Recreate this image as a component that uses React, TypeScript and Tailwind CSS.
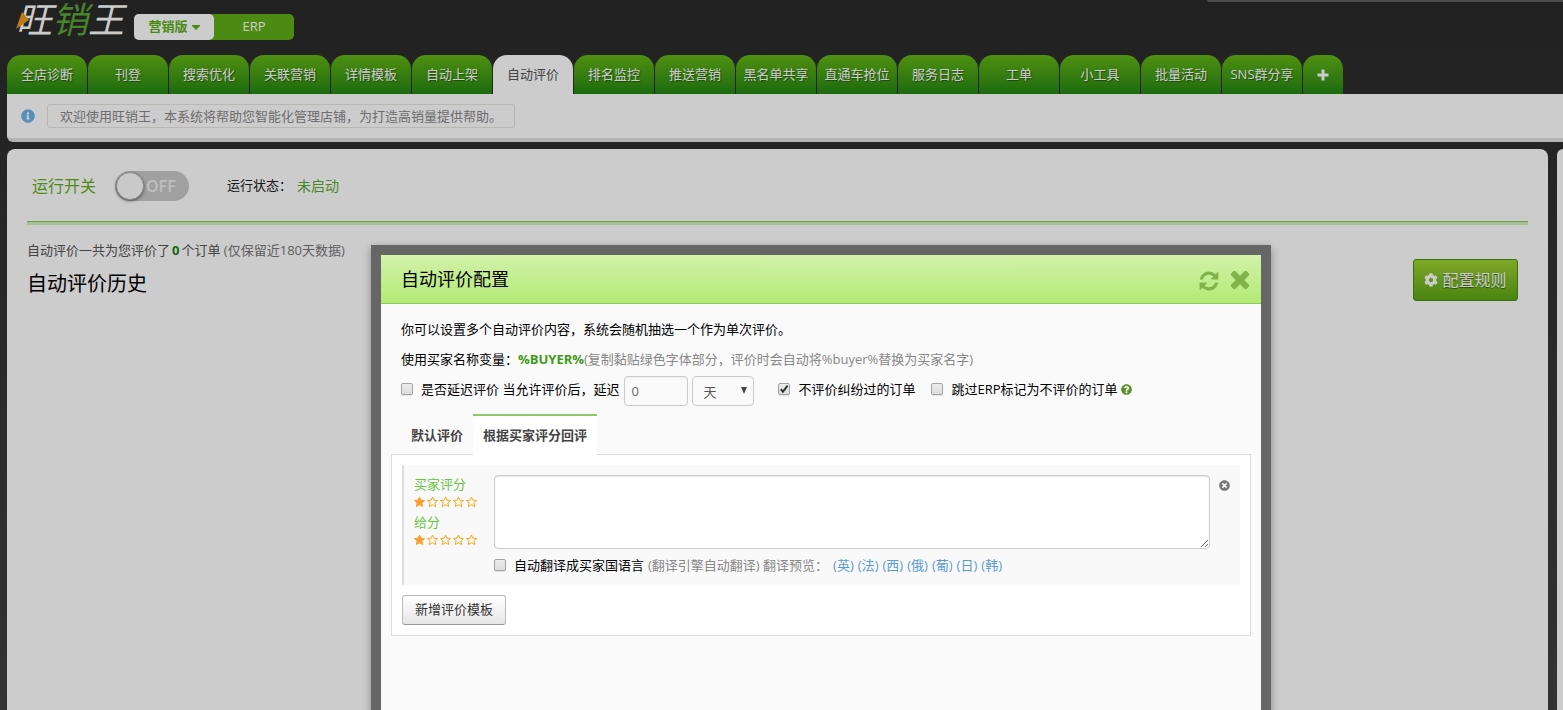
import { useState } from "react";
import type { InputHTMLAttributes } from "react";
import {
  FaCog,
  FaInfoCircle,
  FaQuestionCircle,
  FaTimesCircle,
} from "react-icons/fa";

const TABS = [
  "全店诊断",
  "刊登",
  "搜索优化",
  "关联营销",
  "详情模板",
  "自动上架",
  "自动评价",
  "排名监控",
  "推送营销",
  "黑名单共享",
  "直通车抢位",
  "服务日志",
  "工单",
  "小工具",
  "批量活动",
  "SNS群分享",
];

const LANGUAGES = ["英", "法", "西", "俄", "葡", "日", "韩"];

const RefreshIcon = () => (
  <svg viewBox="0 0 1792 1792" className="size-[22px] fill-current">
    <path d="M1639 1056q0 5-1 7-64 268-268 434.5t-478 166.5q-146 0-282.5-55t-243.5-157l-129 129q-19 19-45 19t-45-19-19-45v-448q0-26 19-45t45-19h448q26 0 45 19t19 45-19 45l-137 137q71 66 161 102t187 36q134 0 250-65t186-179q11-17 53-117 8-23 30-23h192q13 0 22.5 9.5t9.5 22.5zm25-800v448q0 26-19 45t-45 19h-448q-26 0-45-19t-19-45 19-45l138-138q-148-137-349-137-134 0-250 65t-186 179q-11 17-53 117-8 23-30 23h-199q-13 0-22.5-9.5t-9.5-22.5v-7q65-268 270-434.5t480-166.5q146 0 284 55.5t245 156.5l130-129q19-19 45-19t45 19 19 45z" />
  </svg>
);

const CloseIcon = () => (
  <svg viewBox="250 380 1292 1292" className="size-5 fill-current">
    <path d="M1490 1322q0 40-28 68l-136 136q-28 28-68 28t-68-28l-294-294-294 294q-28 28-68 28t-68-28l-136-136q-28-28-28-68t28-68l294-294-294-294q-28-28-28-68t28-68l136-136q28-28 68-28t68 28l294 294 294-294q28-28 68-28t68 28l136 136q28 28 28 68t-28 68l-294 294 294 294q28 28 28 68z" />
  </svg>
);

const Checkbox = (props: InputHTMLAttributes<HTMLInputElement>) => (
  <span className="relative block size-3 shrink-0">
    <input
      type="checkbox"
      className="peer block size-3 appearance-none rounded-[2px] border border-[#a3a3a3] bg-linear-to-b from-[#ededed] to-[#dcdcdc] shadow-[0_1px_1px_rgba(0,0,0,0.1)]"
      {...props}
    />
    <svg
      viewBox="0 0 12 12"
      className="pointer-events-none absolute inset-0 hidden size-3 fill-none stroke-[#333] stroke-2 peer-checked:block"
    >
      <path d="M2.8 6.2 5 8.6 9.6 2.6" />
    </svg>
  </span>
);

const Stars = ({ score }: { score: number }) => (
  <div className="flex h-[15px] items-center gap-px">
    {[1, 2, 3, 4, 5].map((n) => (
      <svg key={n} viewBox="0 0 12 12" className="size-3">
        <path
          d="M5.5 1 6.9 4.2 10.5 4.5 7.8 6.9 8.7 10.6 5.5 8.7 2.3 10.6 3.2 6.9 .5 4.5 4.1 4.2Z"
          fill={n <= score ? "#ff9a3d" : "#fffdf5"}
          stroke="#fba51f"
          strokeWidth="1"
        />
      </svg>
    ))}
  </div>
);

const Header = () => (
  <header className="flex h-[55px] items-start justify-between">
    <div className="flex items-start">
      <a href="#" className="relative ml-4 block h-11 w-[118px]">
        <span className="block whitespace-nowrap text-[36px] italic leading-10 text-white">
          旺<span className="text-[#5aa636]">销</span>王
        </span>
        <svg viewBox="0 0 13 18" className="absolute left-0 top-3 h-[18px] w-[13px]">
          <path d="M6 0 13 8 0 17Z" fill="#ef9b1b" />
        </svg>
      </a>
      <div className="mt-3.5 flex h-[26px] rounded-[5px] bg-[#60ad18] text-[13px]">
        <button className="flex w-20 items-center justify-center gap-1 rounded-[5px] bg-white font-semibold text-[#60ad18]">
          营销版
          <svg viewBox="0 0 8 5" className="h-[5px] w-2 fill-current">
            <path d="M0 0h8v1L4 5 0 1Z" />
          </svg>
        </button>
        <button className="w-20 text-white">ERP</button>
      </div>
    </div>
    <div className="h-0.5 w-[356px] rounded-bl bg-[#5f5f5f]" />
  </header>
);

const NavTabs = () => (
  <nav className="ml-[7px] flex gap-px">
    {TABS.map((tab) => (
      <a
        key={tab}
        href="#"
        className={
          tab === "自动评价"
            ? "h-[39px] w-20 whitespace-nowrap rounded-t-[14px] bg-white text-center text-[13px] leading-[39px] text-[#555]"
            : "h-[39px] w-20 whitespace-nowrap rounded-t-[14px] bg-linear-to-b from-[#63b517] to-[#228512] text-center text-[13px] leading-[39px] text-white [text-shadow:1px_1px_1px_rgba(0,0,0,0.4)]"
        }
      >
        {tab}
      </a>
    ))}
    <button
      aria-label="添加"
      className="flex h-[39px] w-10 items-center justify-center rounded-t-[14px] bg-linear-to-b from-[#63b517] to-[#228512] text-white"
    >
      <svg viewBox="0 0 12 12" className="size-3 fill-current">
        <path d="M4.5 .5h3v4h4v3h-4v4h-3v-4h-4v-3h4Z" />
      </svg>
    </button>
  </nav>
);

const RatingPage = () => (
  <main className="min-w-0 flex-1 rounded-t-lg bg-white px-5">
    <div className="flex h-[72px] items-center pl-[5px] pt-0.5">
      <span className="text-base text-[#66b01e]">运行开关</span>
      <label className="ml-[19px] flex h-[30px] w-[74px] items-center rounded-full bg-[#c8c8c8] p-px text-base font-semibold text-[#efefef]">
        <input type="checkbox" aria-label="运行开关" className="sr-only" />
        <span className="mr-0.5 size-7 rounded-full border border-[#b0b0b0] bg-[#fcfcfc] shadow-[0_1px_3px_rgba(0,0,0,0.5)]" />
        OFF
      </label>
      <span className="ml-[38px] text-[13px] text-[#222]">运行状态：</span>
      <span className="ml-[5px] text-sm text-[#5cab35]">未启动</span>
    </div>
    <div className="h-1 border-t border-[#86c75e] bg-[#d4efbe]" />
    <div className="flex items-start justify-between">
      <div>
        <p className="mt-[15px] text-[13px] leading-5 text-[#555]">
          自动评价一共为您评价了<b className="mx-0.5 text-[#158015]">0</b>个订单{" "}
          <span className="text-[#777]">(仅保留近180天数据)</span>
        </p>
        <h1 className="mt-2.5 text-xl leading-7 text-black">自动评价历史</h1>
      </div>
      <button className="mr-2.5 mt-[34px] flex h-[42px] w-[105px] items-center justify-center gap-1 rounded-[3px] border border-[#4c8a18] bg-linear-to-b from-[#9fd233] to-[#5ba614] text-base text-white [text-shadow:0_1px_1px_rgba(0,0,0,0.5)]">
        <FaCog className="size-3.5" />
        配置规则
      </button>
    </div>
  </main>
);

const ConfigDialog = () => {
  const [skipDisputed, setSkipDisputed] = useState(true);

  return (
    <div
      role="dialog"
      aria-labelledby="dialog-title"
      className="absolute left-[371px] top-[245px] min-h-[500px] w-[900px] border-10 border-[#666] bg-[#fafafa] text-[13px] text-black shadow-[0_3px_8px_rgba(0,0,0,0.35)]"
    >
      <div className="flex h-[49px] items-center justify-between border-b border-[#8fc866] bg-linear-to-b from-[#d2f1a9] to-[#b3ea75] pl-5 pr-[11px]">
        <h2 id="dialog-title" className="text-lg">
          自动评价配置
        </h2>
        <div className="flex items-center gap-2.5 pt-1 text-[#83b14c]">
          <button aria-label="刷新">
            <RefreshIcon />
          </button>
          <button aria-label="关闭">
            <CloseIcon />
          </button>
        </div>
      </div>

      <div className="px-2.5 pt-2.5">
        <div className="px-2.5 leading-[30px]">
          <p>你可以设置多个自动评价内容，系统会随机抽选一个作为单次评价。</p>
          <p>
            使用买家名称变量：<b className="text-[#3f9a16]">%BUYER%</b>
            <span className="text-[#888]">
              (复制黏贴绿色字体部分，评价时会自动将%buyer%替换为买家名字)
            </span>
          </p>
          <div className="flex h-[30px] items-center whitespace-nowrap">
            <label className="flex items-center gap-2">
              <Checkbox />
              是否延迟评价 当允许评价后，延迟
            </label>
            <input
              type="text"
              aria-label="延迟"
              defaultValue="0"
              className="ml-[5px] mt-1 h-[30px] w-16 rounded-[4px] border border-[#ccc] bg-[#fafafa] px-1.5 text-[#666] shadow-[inset_0_1px_1px_rgba(0,0,0,0.05)]"
            />
            <div className="relative ml-1 mt-1 h-[30px] w-[62px]">
              <select
                aria-label="延迟单位"
                className="block size-full appearance-none rounded-[4px] border border-[#ccc] bg-[#fafafa] pl-2.5 text-[#555]"
              >
                <option>天</option>
                <option>小时</option>
              </select>
              <svg
                viewBox="0 0 6 7"
                className="pointer-events-none absolute right-[7px] top-[11px] h-[7px] w-1.5 fill-[#444]"
              >
                <path d="M0 0h6L3 7Z" />
              </svg>
            </div>
            <label className="ml-6 flex items-center gap-2">
              <Checkbox
                checked={skipDisputed}
                onChange={(e) => setSkipDisputed(e.target.checked)}
              />
              不评价纠纷过的订单
            </label>
            <label className="ml-4 flex items-center gap-2">
              <Checkbox />
              跳过ERP标记为不评价的订单
            </label>
            <FaQuestionCircle className="ml-1 size-[11px] text-[#5f8f2e]" />
          </div>
        </div>

        <div className="mt-2.5 flex px-2.5 font-bold text-[#444]">
          <button className="h-10 px-2.5 pt-1">默认评价</button>
          <button className="relative -mb-px h-[41px] border-t-2 border-[#8fc866] bg-white px-2.5">
            根据买家评分回评
          </button>
        </div>

        <div className="border border-[#ddd] bg-white p-2.5">
          <div className="flex h-[120px] items-start border-l-2 border-[#ddd] bg-[#f9f9f9] p-2.5">
            <div className="w-20 text-[#6cc644]">
              <p className="leading-[19px]">买家评分</p>
              <Stars score={1} />
              <p className="mt-1 leading-[19px]">给分</p>
              <Stars score={1} />
            </div>
            <div className="flex-1">
              <textarea
                aria-label="评价内容"
                className="block h-[74px] w-full rounded-[4px] border border-[#ccc] bg-white p-1.5 shadow-[inset_0_1px_1px_rgba(0,0,0,0.1)]"
              />
              <div className="mt-1.5 flex items-center leading-5 text-[#888]">
                <label className="flex items-center gap-2 text-black">
                  <Checkbox />
                  自动翻译成买家国语言
                </label>
                <span className="ml-1">(翻译引擎自动翻译) 翻译预览：</span>
                <span className="ml-[5px] flex gap-1">
                  {LANGUAGES.map((language) => (
                    <a key={language} href="#" className="text-[#5b9bd1]">
                      ({language})
                    </a>
                  ))}
                </span>
              </div>
            </div>
            <button aria-label="删除" className="ml-[9px] mt-[5px] text-[#777]">
              <FaTimesCircle className="size-[11px]" />
            </button>
          </div>
          <button className="mt-2.5 block h-[30px] rounded-[3px] border border-[#bbb] border-b-[#999] bg-linear-to-b from-white to-[#e6e6e6] px-3 text-[#333]">
            新增评价模板
          </button>
        </div>
      </div>
    </div>
  );
};

const App = () => {
  return (
    <div
      lang="zh-CN"
      className="relative flex h-screen flex-col overflow-hidden bg-linear-to-b from-[#2a2a2a] to-[#404040] font-['Open_Sans','Noto_Sans_CJK_SC',sans-serif]"
    >
      <Header />
      <NavTabs />
      <div className="ml-[7px] flex h-12 shrink-0 items-center rounded-bl-md border-b-4 border-[#e0e0e0] bg-white pl-3.5 text-[13px] text-[#8a8a8a]">
        <FaInfoCircle className="size-3.5 text-[#6fb3e8]" />
        <p className="ml-3 h-6 rounded-[3px] border border-[#e6e6de] px-3 leading-[22px]">
          欢迎使用旺销王，本系统将帮助您智能化管理店铺，为打造高销量提供帮助。
        </p>
      </div>
      <div className="ml-[7px] mt-[7px] flex flex-1 gap-[9px]">
        <RatingPage />
        <aside className="w-1.5 rounded-tl-lg bg-white" />
      </div>

      <div className="absolute inset-0 bg-black/20" />
      <ConfigDialog />
    </div>
  );
};

export default App;
